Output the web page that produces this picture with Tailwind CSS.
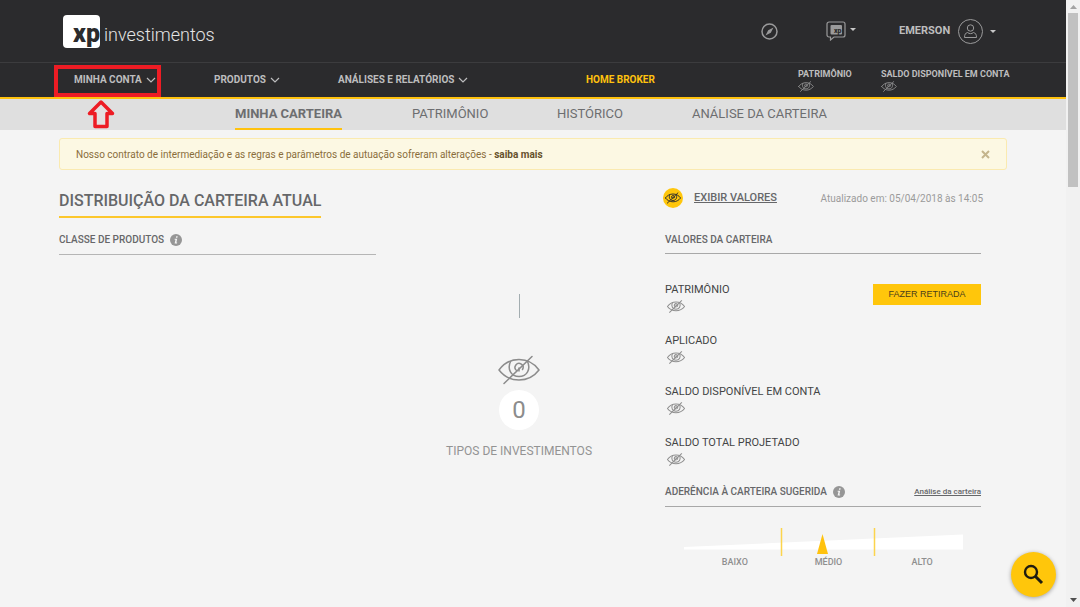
<!DOCTYPE html>
<html lang="pt-BR">
<head>
<meta charset="utf-8">
<meta name="viewport" content="width=device-width, initial-scale=1">
<title>XP Investimentos - Minha Carteira</title>
<script src="https://cdn.jsdelivr.net/npm/@tailwindcss/browser@4"></script>
</head>
<body class="bg-[#f4f4f4] font-['Roboto',sans-serif] text-[#666769]">
<svg class="hidden" aria-hidden="true">
  <symbol id="eye" viewBox="0 0 42 30">
    <g fill="none" stroke="currentColor" stroke-linecap="round" stroke-linejoin="round">
      <path d="M1 15C6 8 13 4.500 21 4.500S36 8 41 15C36 21.500 29 25 21 25S6 21.500 1 15Z"/>
      <path d="M12.500 6.500C9 14 13 21.500 21 21.500S33 14 29.500 6.500"/>
      <path d="M18.500 15.500a4 4 0 1 1 6-1M21 13v3"/>
      <path d="M6 28.500L34 1.500"/>
    </g>
  </symbol>
  <symbol id="chevron" viewBox="0 0 10 6"><path d="M1 1l4 4 4-4" fill="none" stroke="currentColor" stroke-width="1.200"/></symbol>
  <symbol id="caret" viewBox="0 0 6 3"><path d="M0 0h6L3 3z" fill="currentColor"/></symbol>
  <symbol id="info" viewBox="0 0 12 12">
    <circle cx="6" cy="6" r="6" fill="#969696"/>
    <path d="M6.200 2.200h1.500l-.3 1.500H5.900zM4.700 4.700h2.500l-.8 3.700h.8l-.2 1H4.600l.9-3.700h-.9z" fill="#f4f4f4"/>
  </symbol>
</svg>

<div class="flex min-h-screen">
  <div class="min-w-0 flex-1">
    <header class="bg-[#2b2b2d] text-[#bdbdbe]">
      <div class="flex h-[63px] items-center border-b border-[#3c3c3e] pr-[70px] pl-[63px]">
        <a href="#" class="flex items-center gap-1 text-[#e4e4e4]">
          <span class="flex h-[33px] w-[37px] items-end justify-end rounded-[4px] bg-white text-[25px] leading-[29px] font-black text-[#2b2b2d]">xp</span>
          <span class="pt-2 text-[18px] leading-6 font-light">investimentos</span>
        </a>
        <div class="ml-auto flex items-center">
          <button type="button" aria-label="Explorar" class="text-[#9a9a9b]">
            <svg class="size-[17px]" viewBox="0 0 17 17"><circle cx="8.500" cy="8.500" r="7.500" fill="none" stroke="currentColor" stroke-width="1.500"/><path d="M12.500 4.500L9.800 9.800 4.500 12.500 7.200 7.200z" fill="currentColor"/></svg>
          </button>
          <button type="button" aria-label="Mensagens" class="ml-12 flex items-center gap-1 text-[#9a9a9b]">
            <svg class="h-5 w-5" viewBox="0 0 20 20"><path d="M3 1h14a2 2 0 0 1 2 2v11a2 2 0 0 1-2 2H8l-3.500 3V16H3a2 2 0 0 1-2-2V3a2 2 0 0 1 2-2Z" fill="none" stroke="currentColor" stroke-width="1.200"/><rect x="4.500" y="4" width="11.500" height="9.500" rx="1" fill="currentColor"/><text x="8" y="12" font-size="7" font-weight="900" fill="#2b2b2d">xp</text></svg>
            <svg class="-mt-1 h-[3px] w-1.5 text-[#c8c8c8]"><use href="#caret"/></svg>
          </button>
          <button type="button" class="ml-[43px] flex items-center text-[11px] font-bold">
            <span class="w-[59px] pt-px text-left">EMERSON</span>
            <svg class="size-[25px] text-[#9a9a9b]" viewBox="0 0 25 25" fill="none" stroke="currentColor"><circle cx="12.500" cy="12.500" r="12"/><circle cx="12.500" cy="9" r="3.200"/><path d="M9.500 13.500c-2 .5-3 2-3 5h12c0-3-1-4.500-3-5-2 1.500-4 1.500-6 0Z"/></svg>
            <svg class="ml-[7px] h-[3px] w-1.5 text-[#c8c8c8]"><use href="#caret"/></svg>
          </button>
        </div>
      </div>
      <nav class="grid h-9 grid-cols-[160px_124px_248px_212px_83px_1fr] items-center border-b-2 border-[#ffc20e] pl-[54px] text-[10px] leading-3 font-bold" aria-label="Principal">
        <div class="relative w-[107px]">
          <button type="button" class="mt-0.5 flex h-8 w-full items-center gap-1 border-4 border-[#ed1c24] pb-0.5 pl-4 font-bold">MINHA CONTA <svg class="h-1.5 w-2.5"><use href="#chevron"/></svg></button>
          <svg class="absolute top-full left-[32px] z-10 mt-0.5 h-[30px] w-[30px]" viewBox="0 0 30 30" aria-hidden="true"><path d="M15 3L3.500 14.500H9V27.500H21V14.500H26.500Z" fill="#e4e0e0" stroke="#ed1c24" stroke-width="3.500" stroke-linejoin="round"/></svg>
        </div>
        <button type="button" class="flex items-center gap-1 font-bold">PRODUTOS <svg class="h-1.5 w-2.5"><use href="#chevron"/></svg></button>
        <button type="button" class="flex items-center gap-1 font-bold">ANÁLISES E RELATÓRIOS <svg class="h-1.5 w-2.5"><use href="#chevron"/></svg></button>
        <a href="#" class="text-[#ffc20e]">HOME BROKER</a>
        <div class="text-[9px]">PATRIMÔNIO<svg class="mt-px h-[11px] w-4 stroke-[2.500] text-[#8a8a8b]"><use href="#eye"/></svg></div>
        <div class="text-[9px]">SALDO DISPONÍVEL EM CONTA<svg class="mt-px h-[11px] w-4 stroke-[2.500] text-[#8a8a8b]"><use href="#eye"/></svg></div>
      </nav>
    </header>

    <nav class="grid h-[31px] grid-cols-[177px_145px_135px_1fr] bg-[#dfdfdf] pl-[235px] text-[13px] leading-[29px] text-[#6d6e70]" aria-label="Carteira">
      <a href="#" class="justify-self-start border-b-2 border-[#ffc20e] font-bold" aria-current="page">MINHA CARTEIRA</a>
      <a href="#">PATRIMÔNIO</a>
      <a href="#">HISTÓRICO</a>
      <a href="#">ANÁLISE DA CARTEIRA</a>
    </nav>

    <main class="px-[59px] pt-2">
      <div role="alert" class="flex h-8 items-center justify-between rounded-[3px] border border-[#faeab0] bg-[#fcf8e3] pr-4 pl-4 text-[10px] text-[#8a6d3b]">
        <p>Nosso contrato de intermediação e as regras e parâmetros de autuação sofreram alterações - <a href="#" class="font-bold text-[#66512c]">saiba mais</a></p>
        <button type="button" aria-label="Fechar" class="text-[#c4b58c]"><svg class="size-[9px]" viewBox="0 0 9 9"><path d="M1 1l7 7M8 1L1 8" stroke="currentColor" stroke-width="2"/></svg></button>
      </div>

      <div class="grid grid-cols-[1fr_316px] pr-[26px]">
        <section>
          <h1 class="mt-[19px] w-fit border-b-2 border-[#fcc72c] pb-[3px] text-[16px] leading-6 font-medium">DISTRIBUIÇÃO DA CARTEIRA ATUAL</h1>
          <h2 class="mt-[10px] flex w-[317px] items-center gap-1.5 border-b border-[#b5b5b5] pb-0.5 text-[10px] leading-6 font-medium">CLASSE DE PRODUTOS <svg class="size-3"><use href="#info"/></svg></h2>
          <div class="mt-[39px] mr-[73px] flex flex-col items-end">
            <div class="flex flex-col items-center text-[#8c8c8c]">
              <div class="h-6 w-px bg-[#a3adb0]"></div>
              <svg class="mt-[37px] h-[30px] w-[42px] stroke-[1.500]"><use href="#eye"/></svg>
              <div class="mt-[5px] flex size-10 items-center justify-center rounded-full bg-white text-[24px]">0</div>
              <p class="mt-3 text-[12px] leading-[18px] text-[#939393]">TIPOS DE INVESTIMENTOS</p>
            </div>
          </div>
        </section>

        <section>
          <div class="mt-[17px] -mr-0.5 -ml-0.5 flex h-[22px] items-center">
            <span class="flex size-5 items-center justify-center rounded-full bg-[#ffc60b] text-[#2b2b2d]"><svg class="h-3 w-4 stroke-[2.500]"><use href="#eye"/></svg></span>
            <a href="#" class="ml-[11px] text-[11px] font-medium underline">EXIBIR VALORES</a>
            <span class="ml-auto text-[10px] text-[#9b9b9b]">Atualizado em: 05/04/2018 às 14:05</span>
          </div>
          <h2 class="mt-[19px] border-b border-[#a8a8a8] pb-px text-[10px] leading-6 font-medium">VALORES DA CARTEIRA</h2>
          <div class="mt-7 flex items-start justify-between">
            <dl class="flex flex-col gap-5 text-[11px] leading-4 text-[#434445]">
              <div><dt>PATRIMÔNIO</dt><dd class="mt-0.5"><svg class="ml-0.5 h-[13px] w-[18px] stroke-[2.500] text-[#8f8f8f]"><use href="#eye"/></svg></dd></div>
              <div><dt>APLICADO</dt><dd class="mt-0.5"><svg class="ml-0.5 h-[13px] w-[18px] stroke-[2.500] text-[#8f8f8f]"><use href="#eye"/></svg></dd></div>
              <div><dt>SALDO DISPONÍVEL EM CONTA</dt><dd class="mt-0.5"><svg class="ml-0.5 h-[13px] w-[18px] stroke-[2.500] text-[#8f8f8f]"><use href="#eye"/></svg></dd></div>
              <div><dt>SALDO TOTAL PROJETADO</dt><dd class="mt-0.5"><svg class="ml-0.5 h-[13px] w-[18px] stroke-[2.500] text-[#8f8f8f]"><use href="#eye"/></svg></dd></div>
            </dl>
            <button type="button" class="mt-0.5 h-[21px] w-[108px] bg-[#ffc60b] font-['Liberation_Sans',sans-serif] text-[9px] text-[#4a3f1c]">FAZER RETIRADA</button>
          </div>
          <div class="mt-3.5 flex items-center border-b border-[#a8a8a8] pb-0.5">
            <h2 class="flex items-center gap-1.5 text-[10px] leading-6 font-medium">ADERÊNCIA À CARTEIRA SUGERIDA <svg class="size-3"><use href="#info"/></svg></h2>
            <a href="#" class="ml-auto text-[8px] font-medium underline">Análise da carteira</a>
          </div>
          <svg class="mx-[19px] mt-[21px] h-7 w-[279px]" viewBox="0 0 279 28" role="img" aria-label="Aderência: médio">
            <path d="M0 19L279 6.500V21.500H0Z" fill="#fff"/>
            <path d="M97.500 0V28M190.500 0V28" stroke="#fcd44c" stroke-width="1.500"/>
            <path d="M138.500 6L144 26H133Z" fill="#ffc20e"/>
          </svg>
          <div class="mr-3 ml-[23px] grid grid-cols-3 text-center text-[9px] leading-3 font-medium text-[#8f8f8f]">
            <span>BAIXO</span><span>MÉDIO</span><span>ALTO</span>
          </div>
        </section>
      </div>
    </main>
  </div>

  <div class="flex w-3.5 shrink-0 flex-col items-center justify-between bg-[#f1f1f1]" aria-hidden="true">
    <div class="flex flex-col items-center">
      <svg class="h-[13px] w-[7px]" viewBox="0 0 7 13"><path d="M0 9h7L3.500 5z" fill="#a3a3a3"/></svg>
      <div class="h-[174px] w-2.5 bg-[#c1c1c1]"></div>
    </div>
    <svg class="h-[13px] w-[7px]" viewBox="0 0 7 13"><path d="M0 4h7L3.500 8z" fill="#505050"/></svg>
  </div>
</div>

<button type="button" aria-label="Buscar" class="fixed right-6 bottom-2.5 flex size-[45px] items-center justify-center rounded-full bg-[#ffc60b] text-[#1f1c10] shadow-[0_1px_4px_rgba(0,0,0,0.35)]">
  <svg class="size-[21px]" viewBox="0 0 21 21" fill="none" stroke="currentColor"><circle cx="8" cy="8" r="6" stroke-width="2.400"/><path d="M12.500 12.500L19 19" stroke-width="3"/></svg>
</button>
</body>
</html>
